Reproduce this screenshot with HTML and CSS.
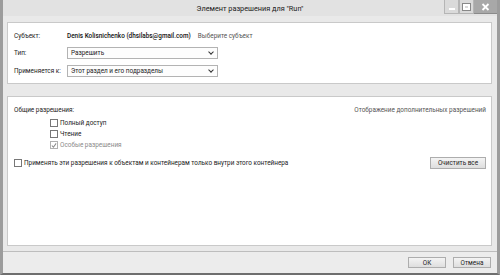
FILE: index.html
```html
<!DOCTYPE html>
<html lang="ru">
<head>
    <meta charset="UTF-8">
    <title>Элемент разрешения для "Run"</title>
    <link rel="stylesheet" href="styles.css">
</head>
<body>
    <div class="window">
        <div class="titlebar">
            <span class="title">Элемент разрешения для "Run"</span>
            <div class="win-buttons">
                <span class="wbtn min"><span class="min-bar"></span></span>
                <span class="wbtn max"><span class="max-box"></span></span>
                <span class="wbtn close">
                    <svg width="9" height="8" viewBox="0 0 9 8"><path d="M1.5 1 L7.5 7 M7.5 1 L1.5 7" stroke="#fff" stroke-width="1.8"/></svg>
                </span>
            </div>
        </div>

        <div class="body">
            <div class="panel top-panel">
                <div class="row subject-row">
                    <span class="label">Субъект:</span>
                    <span class="subject">Denis Kolisnichenko (dhsilabs@gmail.com)</span>
                    <span class="link">Выберите субъект</span>
                </div>
                <div class="row">
                    <span class="label">Тип:</span>
                    <div class="select">Разрешить<span class="arrow"></span></div>
                </div>
                <div class="row">
                    <span class="label">Применяется к:</span>
                    <div class="select">Этот раздел и его подразделы<span class="arrow"></span></div>
                </div>
            </div>

            <div class="panel main-panel">
                <div class="perm-head">
                    <span>Общие разрешения:</span>
                    <span class="link">Отображение дополнительных разрешений</span>
                </div>
                <div class="perm-list">
                    <label class="check"><span class="box"></span>Полный доступ</label>
                    <label class="check"><span class="box"></span>Чтение</label>
                    <label class="check disabled"><span class="box">
                        <svg width="7" height="7" viewBox="0 0 7 7"><path d="M1 3.5 L2.8 5.5 L6 1" fill="none" stroke="#8a8a8a" stroke-width="1.2"/></svg>
                    </span>Особые разрешения</label>
                </div>
                <div class="apply-row">
                    <label class="check"><span class="box"></span>Применять эти разрешения к объектам и контейнерам только внутри этого контейнера</label>
                    <button class="btn clear-btn">Очистить все</button>
                </div>
            </div>
        </div>

        <div class="footer">
            <button class="btn">ОК</button>
            <button class="btn">Отмена</button>
        </div>
    </div>
</body>
</html>
```

FILE: styles.css
```css
* {
    margin: 0;
    padding: 0;
    box-sizing: border-box;
    font-family: Roboto, 'Noto Sans', sans-serif;
}

body {
    width: 500px;
    height: 275px;
    background: #777;
    overflow: hidden;
}

.window {
    width: 500px;
    height: 275px;
    background: #e9e9e9;
    border-left: 3px solid #9c9c9c;
    border-right: 3px solid #9c9c9c;
    border-bottom: 2px solid #6e6e6e;
    display: flex;
    flex-direction: column;
}

.titlebar {
    height: 16px;
    flex-shrink: 0;
    position: relative;
    background: #e2e2e2;
    display: flex;
    align-items: center;
    justify-content: center;
}

.title {
    font-size: 7.3px;
    color: #1a1a1a;
}

.win-buttons {
    position: absolute;
    top: 0;
    right: 0;
    display: flex;
}

.wbtn {
    height: 14px;
    display: flex;
    align-items: center;
    justify-content: center;
}

.min, .max {
    width: 15px;
    background: #dadada;
    border: 1px solid #b5b5b5;
    border-top: none;
}

.min-bar {
    width: 6px;
    height: 2px;
    background: #fff;
    margin-top: 5px;
}

.max-box {
    width: 7px;
    height: 6px;
    border: 2px solid #fff;
    outline: 1px solid #888;
}

.close {
    width: 23px;
    background: #a8a8a8;
    border-bottom: 1px solid #8a8a8a;
}

.body {
    padding: 6px 5px 0 4px;
    display: flex;
    flex-direction: column;
    gap: 12px;
}

.panel {
    flex-shrink: 0;
    background: #fff;
    border: 1px solid #c9c9c9;
}

.top-panel {
    height: 62px;
    padding: 8px 0 0 6px;
    display: flex;
    flex-direction: column;
    gap: 6px;
}

.row {
    display: flex;
    align-items: center;
    height: 12px;
    font-size: 6.4px;
    color: #222;
}

.subject-row {
    height: 10px;
}

.label {
    width: 53px;
}

.subject {
    font-weight: 500;
    color: #111;
    margin-right: 7px;
}

.link {
    color: #555;
}

.select {
    width: 151px;
    height: 12px;
    border: 1px solid #b3b3b3;
    padding-left: 3px;
    line-height: 10px;
    position: relative;
    background: #fdfdfd;
}

.arrow {
    position: absolute;
    right: 4px;
    top: 2px;
    width: 4px;
    height: 4px;
    border-right: 1.2px solid #333;
    border-bottom: 1.2px solid #333;
    transform: rotate(45deg);
}

.main-panel {
    height: 150px;
    padding: 8px 5px 0 6px;
    font-size: 6.4px;
    color: #222;
}

.perm-head {
    display: flex;
    justify-content: space-between;
    height: 10px;
    align-items: center;
}

.perm-list {
    padding: 3px 0 0 36px;
    display: flex;
    flex-direction: column;
    gap: 1px;
}

.check {
    display: flex;
    align-items: center;
    height: 10px;
}

.box {
    width: 8px;
    height: 8px;
    border: 1px solid #777;
    background: #fff;
    margin-right: 2px;
    display: flex;
    align-items: center;
    justify-content: center;
}

.disabled {
    color: #8a8a8a;
}

.disabled .box {
    border-color: #b0b0b0;
}

.apply-row {
    display: flex;
    justify-content: space-between;
    align-items: center;
    margin-top: 7px;
}

.btn {
    height: 11px;
    width: 38px;
    font-size: 6.4px;
    color: #222;
    background: linear-gradient(#f4f4f4, #dedede);
    border: 1px solid #adadad;
}

.clear-btn {
    width: 56px;
    height: 12px;
}

.footer {
    height: 22px;
    flex-shrink: 0;
    margin-top: 5px;
    border-top: 1px solid #bdbdbd;
    background: #ececec;
    display: flex;
    justify-content: flex-end;
    align-items: center;
    gap: 7px;
    padding-right: 6px;
}
```
